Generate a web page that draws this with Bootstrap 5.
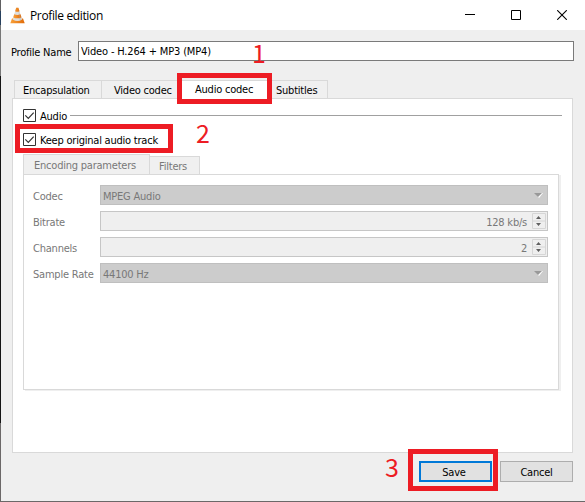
<!DOCTYPE html>
<html lang="en">
<head>
<meta charset="utf-8">
<meta name="viewport" content="width=device-width, initial-scale=1">
<title>Profile edition</title>
<link href="https://cdn.jsdelivr.net/npm/bootstrap@5.3.0/dist/css/bootstrap.min.css" rel="stylesheet">
<style>
body{font:11px/13px "DejaVu Sans Condensed","DejaVu Sans",sans-serif;font-stretch:condensed;letter-spacing:-.22px;color:#000;background:#efefef;width:585px;height:502px;overflow:hidden}
svg{display:block;flex:none}
.win{height:502px;border-bottom:1px solid #6b6868}
.win-edge{width:1px;flex:none;background:linear-gradient(#606062 0 11px,#27405e 11px 25px,#777 25px 76px,#151515 76px 423px,#6b6868 423px)}
.title-bar{height:30px;background:#fff;padding-left:9px}
.title-text{font:12px/16px "Open Sans","Noto Sans",sans-serif;letter-spacing:-.36px;margin:1px 0 0 5px}
.win-btns{gap:36px;margin-right:18px}
.name-row{height:20px;margin:11px 11px 0 10px}
.name-label{width:67px;flex:none;padding-top:2px}
.name-input{height:20px;min-height:0;border:1px solid #7a7a7a;background:#fff;padding:1px 2px 0;border-radius:0;font:inherit;letter-spacing:-.16px;color:#000}
.name-input:focus{box-shadow:none}
.codec-tabs{margin:19px 0 0 13px;height:18px}
.codec-tab{height:18px;border:1px solid #d9d9d9;border-left:0;border-bottom:0;background:#f0f0f0;padding:3px 0 0 8px}
.codec-tab:first-child{border-left:1px solid #d9d9d9}
.tab-enc{width:88px}.tab-vid{width:78px;padding-left:12px}.tab-aud{width:90px;background:#fff;padding:2px 0 0 15px;height:21px}.tab-sub{width:58px;padding-left:6px}
.pane{width:561px;height:355px;margin-left:11px;border:1px solid #d9d9d9;background:#fff;padding:10px 10px 0 10px}
.check-row{height:13px;gap:4px}
.check-row span,.field-label,.ctl span{padding-top:2px}
.check-row + .check-row{margin-top:11px}
.group-line{height:1px;background:#a0a0a0;margin:0 0 1px -1px}
.muted{color:#787878}
.sub-tabs{height:20px;margin-top:8px}
.sub-tab{border:1px solid #d9d9d9;border-bottom:0;background:#f0f0f0}
.sub-1{width:127px;height:20px;padding:4px 0 0 10px}
.sub-2{width:50px;height:18px;border-left:0;padding:3px 0 0 9px}
.sub-pane{width:536px;height:216px;border:1px solid #d9d9d9;box-shadow:2px 1px 0 #efefef;padding:10px 10px 0 9px}
.field{height:20px;margin-bottom:6px}
.field-label{width:67px;flex:none}
.ctl{height:20px;border:1px solid #bfbfbf;padding-left:2px;padding-right:4px;background:#ccc}
.ctl-spin{background:#efefef;border-color:#c6c6c6;padding-right:1px}
.ctl-spin span{margin-right:1px}
.dlg-btns{margin:8px 12px 0 0;gap:8px}
.dlg-btn{width:73px;height:21px;border:1px solid #adadad;border-radius:0;background:#e1e1e1;color:#000;font:inherit;letter-spacing:inherit;padding:2px 0 0}
.dlg-btn.primary{border:2px solid #0078d7;padding-right:3px}
.mark-box{position:absolute;border:5px solid #ed1c24;pointer-events:none}
.m1{left:177px;top:73px;width:95px;height:31px}
.m2{left:15px;top:124px;width:158px;height:29px}
.m3{left:408px;top:449px;width:90px;height:42px}
.mark-num{position:absolute;font:25px/26px "Noto Sans CJK SC",sans-serif;letter-spacing:0;color:#ed1c24}
.n1{left:252px;top:39px}.n2{left:196px;top:119px}.n3{left:385px;top:453px}
</style>
<script src="https://cdn.jsdelivr.net/npm/bootstrap@5.3.0/dist/js/bootstrap.bundle.min.js"></script>
</head>
<body>
<div class="win d-flex position-relative">
  <div class="win-edge"></div>
  <main class="flex-grow-1">
    <header class="title-bar d-flex align-items-center">
      <svg width="15" height="17" viewBox="0 0 15 17">
        <defs><linearGradient id="o"><stop stop-color="#f9a13a"/><stop offset="1" stop-color="#e06a08"/></linearGradient></defs>
        <path d="M2 11.5h11l1.7 4.8H.3z" fill="url(#o)"/>
        <path d="M6.2.8h2.2l3.7 11.7q-4.7 3-9.4 0z" fill="#dededc"/>
        <path d="M6.2.8h2.2l1.1 3.4q-2.2 1-4.4 0zM4.2 7.3q3.1 1.3 6.3 0l1 3.1q-4.2 1.9-8.3 0z" fill="url(#o)"/>
        <path d="M9 4.4l2.5 8.5-2 .7-1-9z" fill="#a9a9a5" opacity=".35"/>
      </svg>
      <span class="title-text">Profile edition</span>
      <div class="win-btns d-flex ms-auto">
        <svg width="10" height="10"><path d="M0 4.5h10" stroke="#000"/></svg>
        <svg width="10" height="10"><path d="M.5.5h9v9h-9z" fill="none" stroke="#000"/></svg>
        <svg width="10" height="10"><path d="M.2.2l9.6 9.6M9.8.2L.2 9.8" stroke="#000" stroke-width="1.1"/></svg>
      </div>
    </header>
    <div class="name-row d-flex align-items-center">
      <label class="name-label" for="pn">Profile Name</label>
      <input id="pn" class="name-input form-control" value="Video - H.264 + MP3 (MP4)">
    </div>
    <nav class="codec-tabs d-flex">
      <div class="codec-tab tab-enc">Encapsulation</div>
      <div class="codec-tab tab-vid">Video codec</div>
      <div class="codec-tab tab-aud">Audio codec</div>
      <div class="codec-tab tab-sub">Subtitles</div>
    </nav>
    <section class="pane">
      <div class="check-row d-flex align-items-center">
        <svg width="13" height="13"><path d="M.5.5h12v12H.5z" fill="#fff" stroke="#333"/><path d="M2.3 6.3l3 3 5.4-5.7" fill="none" stroke="#333" stroke-width="1.2"/></svg>
        <span>Audio</span><div class="group-line flex-grow-1"></div>
      </div>
      <div class="check-row d-flex align-items-center">
        <svg width="13" height="13"><path d="M.5.5h12v12H.5z" fill="#fff" stroke="#333"/><path d="M2.3 6.3l3 3 5.4-5.7" fill="none" stroke="#333" stroke-width="1.2"/></svg>
        <span>Keep original audio track</span>
      </div>
      <div class="sub-tabs d-flex align-items-end muted">
        <div class="sub-tab sub-1">Encoding parameters</div>
        <div class="sub-tab sub-2">Filters</div>
      </div>
      <div class="sub-pane muted">
        <div class="field d-flex align-items-center">
          <div class="field-label">Codec</div>
          <div class="ctl d-flex flex-grow-1 align-items-center justify-content-between"><span>MPEG Audio</span>
            <svg width="9" height="5"><path d="M1 0h8L5 5z" fill="#fff"/><path d="M0 0h8L4 4z" fill="#999"/></svg></div>
        </div>
        <div class="field d-flex align-items-center">
          <div class="field-label">Bitrate</div>
          <div class="ctl ctl-spin d-flex flex-grow-1 align-items-center justify-content-end gap-1"><span>128 kb/s</span>
            <svg width="14" height="16"><path d="M.5.5h13v15H.5zM.5 8h13" fill="none" stroke="#d6d6d6"/><path d="M4 6h5L6.5 3zM4 10h5l-2.5 3z" fill="#606060"/></svg></div>
        </div>
        <div class="field d-flex align-items-center">
          <div class="field-label">Channels</div>
          <div class="ctl ctl-spin d-flex flex-grow-1 align-items-center justify-content-end gap-1"><span>2</span>
            <svg width="14" height="16"><path d="M.5.5h13v15H.5zM.5 8h13" fill="none" stroke="#d6d6d6"/><path d="M4 6h5L6.5 3zM4 10h5l-2.5 3z" fill="#606060"/></svg></div>
        </div>
        <div class="field d-flex align-items-center">
          <div class="field-label">Sample Rate</div>
          <div class="ctl d-flex flex-grow-1 align-items-center justify-content-between"><span>44100 Hz</span>
            <svg width="9" height="5"><path d="M1 0h8L5 5z" fill="#fff"/><path d="M0 0h8L4 4z" fill="#999"/></svg></div>
        </div>
      </div>
    </section>
    <div class="dlg-btns d-flex justify-content-end">
      <button class="dlg-btn primary">Save</button>
      <button class="dlg-btn">Cancel</button>
    </div>
  </main>
  <div class="mark-box m1"></div>
  <div class="mark-box m2"></div>
  <div class="mark-box m3"></div>
  <div class="mark-num n1">1</div>
  <div class="mark-num n2">2</div>
  <div class="mark-num n3">3</div>
</div>
</body>
</html>
